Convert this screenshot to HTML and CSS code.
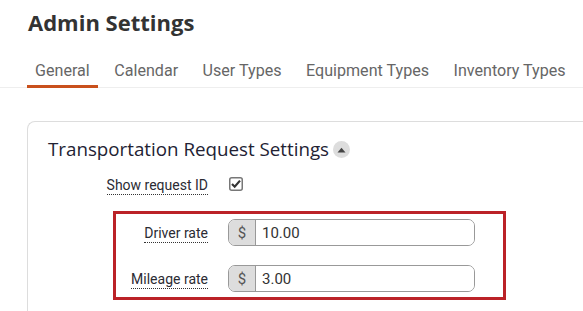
FILE: index.html
```html
<!DOCTYPE html>
<html>
<head>
<meta charset="utf-8">
<link rel="stylesheet" href="styles.css">
</head>
<body>
<div class="page">
  <h1 class="title">Admin Settings</h1>
  <nav class="tabs">
    <a class="tab active">General</a>
    <a class="tab">Calendar</a>
    <a class="tab">User Types</a>
    <a class="tab">Equipment Types</a>
    <a class="tab">Inventory Types</a>
  </nav>
  <section class="card">
    <h2 class="card-title">Transportation Request Settings <span class="toggle"><svg width="9" height="6" viewBox="0 0 9 6"><path d="M0.5 5.5 L4.5 0.8 L8.5 5.5 Z" fill="#444"/></svg></span></h2>
    <div class="row row-check">
      <span class="label"><span class="lbl">Show request ID</span></span>
      <span class="checkbox"><svg width="14" height="14" viewBox="0 0 14 14"><rect x="0.75" y="0.75" width="12.5" height="12.5" rx="2" fill="#fff" stroke="#777" stroke-width="1.5"/><path d="M3 7 L5.7 9.7 L11 3.6" fill="none" stroke="#333" stroke-width="2.2"/></svg></span>
    </div>
    <div class="highlight">
      <div class="row">
        <span class="label hl-label"><span class="lbl">Driver rate</span></span>
        <div class="input-group"><span class="addon">$</span><span class="input">10.00</span></div>
      </div>
      <div class="row">
        <span class="label hl-label"><span class="lbl">Mileage rate</span></span>
        <div class="input-group"><span class="addon">$</span><span class="input">3.00</span></div>
      </div>
    </div>
  </section>
</div>
</body>
</html>
```

FILE: styles.css
```css
html, body {
  margin: 0;
  padding: 0;
  background: #fff;
  overflow: hidden;
}
.page {
  width: 583px;
  height: 311px;
  overflow: hidden;
}
.title {
  margin: 0;
  padding: 7px 0 0 28px;
  font-family: "Open Sans", sans-serif;
  font-weight: 700;
  font-size: 22px;
  line-height: 30px;
  color: #333;
}
.tabs {
  display: flex;
  gap: 8.5px;
  margin-top: 24px;
  padding-left: 27px;
  border-bottom: 1px solid #eee;
  white-space: nowrap;
}
.tab {
  display: block;
  padding: 0 8px 4px;
  font-family: Roboto, sans-serif;
  font-size: 16.1px;
  line-height: 20px;
  color: #666;
  border-bottom: 3px solid transparent;
  margin-bottom: -1px;
}
.tab.active {
  border-bottom-color: #c9501c;
}
.card {
  margin: 33px 0 0 27px;
  border: 1px solid #ddd;
  border-right: none;
  border-radius: 8px 0 0 0;
  padding: 12px 0 40px 20px;
}
.card-title {
  margin: 0;
  display: flex;
  align-items: center;
  gap: 4px;
  font-family: "Open Sans", sans-serif;
  font-weight: 400;
  font-size: 18.75px;
  line-height: 30px;
  color: #222233;
}
.toggle {
  display: inline-flex;
  align-items: center;
  justify-content: center;
  width: 17px;
  height: 17px;
  border-radius: 50%;
  background: #ddd;
  margin-top: 1px;
}
.row {
  display: flex;
  align-items: center;
  gap: 20px;
}
.row-check {
  margin-top: 11px;
  height: 20px;
}
.label {
  width: 160px;
  text-align: right;
  font-family: Roboto, sans-serif;
  font-size: 14px;
  color: #2b2b33;
}
.lbl {
  border-bottom: 1px dotted #333;
  padding-bottom: 1px;
}
.checkbox {
  display: flex;
  margin-left: 1px;
  margin-top: -2px;
}
.highlight {
  margin: 16px 0 0 65px;
  width: 387px;
  border: 3px solid #bb2228;
  padding: 5px 0;
  display: flex;
  flex-direction: column;
  gap: 19px;
}
.hl-label {
  width: 92px;
}
.input-group {
  display: flex;
  width: 247px;
  height: 27px;
  box-sizing: border-box;
  border: 1px solid #999;
  border-radius: 7px;
  overflow: hidden;
  font-family: Roboto, sans-serif;
  font-size: 15px;
}
.addon {
  width: 26px;
  background: #ddd;
  border-right: 1px solid #999;
  color: #555;
  display: flex;
  align-items: center;
  justify-content: center;
}
.input {
  flex: 1;
  display: flex;
  align-items: center;
  padding-left: 6px;
  color: #333;
  background: #fff;
}
```
